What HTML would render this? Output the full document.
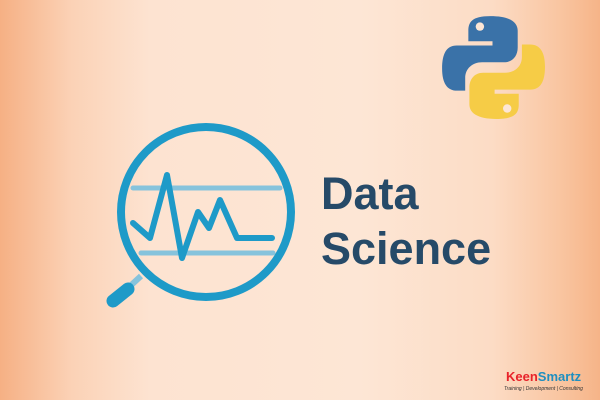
<!DOCTYPE html>
<html><head><style>
html,body{margin:0;padding:0}
body{width:600px;height:400px;overflow:hidden;position:relative;
background:linear-gradient(90deg,#f6b084 0%,#fbd2b6 12%,#fde3d1 25%,#fde6d5 60%,#fcdcc5 82%,#f9c6a2 93%,#f6b488 100%);
font-family:"Liberation Sans",sans-serif}
.t{position:absolute;left:321px;color:#264a68;font-weight:bold;font-size:45px;line-height:1}
</style></head><body>
<svg width="600" height="400" style="position:absolute;left:0;top:0">
<line x1="133" y1="188" x2="280" y2="188" stroke="#86c3dc" stroke-width="5" stroke-linecap="round"/>
<line x1="141" y1="253" x2="273" y2="253" stroke="#86c3dc" stroke-width="5" stroke-linecap="round"/>
<polyline points="133,223 150,238 167,175 182,258 198,212 209,228 220,200 237,238 272,238" fill="none" stroke="#1e9ac8" stroke-width="6" stroke-linejoin="round" stroke-linecap="round"/>
<circle cx="206" cy="212" r="85" fill="none" stroke="#1e9ac8" stroke-width="8"/>
<line x1="141" y1="276" x2="128" y2="288" stroke="#86c3dc" stroke-width="6"/>
<line x1="128" y1="289" x2="113" y2="301" stroke="#1e9ac8" stroke-width="13" stroke-linecap="round"/>
<g transform="translate(440,14) scale(1.05)">
<path d="M48 2 C30 2 27 8 27 16 V26 H50 V30 H16 C6 30 2 38 2 52 C2 66 7 73 16 73 H24 V61 C24 52 31 46 40 46 H61 C69 46 74 40 74 32 V16 C74 8 67 2 48 2 Z" fill="#3a72a8"/>
<circle cx="38" cy="12" r="4" fill="#fde6d5"/>
<g transform="rotate(180 51 51)">
<path d="M48 2 C30 2 27 8 27 16 V26 H50 V30 H16 C6 30 2 38 2 52 C2 66 7 73 16 73 H24 V61 C24 52 31 46 40 46 H61 C69 46 74 40 74 32 V16 C74 8 67 2 48 2 Z" fill="#f6cc46"/>
<circle cx="38" cy="12" r="4" fill="#fde6d5"/>
</g></g>
</svg>
<div class="t" style="top:171px">Data</div>
<div class="t" style="top:226px">Science</div>
<div style="position:absolute;left:506px;top:370px;font-weight:bold;font-size:13px;line-height:1"><span style="color:#e8222a">Keen</span><span style="color:#1f8fc0">Smartz</span></div>
<div style="position:absolute;left:504px;top:386px;font-size:5px;color:#333;font-style:italic">Training | Development | Consulting</div>
</body></html>
